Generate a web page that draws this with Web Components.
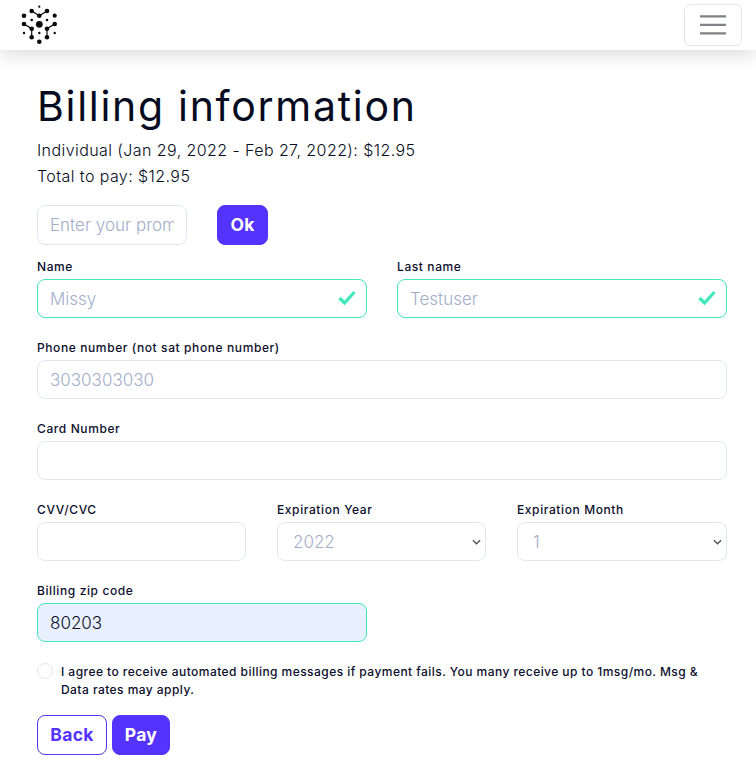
<!DOCTYPE html>
<html lang="en">
<head>
<meta charset="utf-8">
<title>Billing information</title>
<style>
    html, body { margin: 0; padding: 0; background: #fff; }
    body { font-family: 'Inter', 'Noto Sans', sans-serif; color: #0b0e2c; }
</style>
</head>
<body>
<nav-bar></nav-bar>
<billing-page>
    <div slot="heading">Billing information</div>
    <span slot="summary">Individual (Jan 29, 2022 - Feb 27, 2022): $12.95</span>
    <span slot="summary">Total to pay: $12.95</span>
    <form-field slot="promo" placeholder="Enter your promo code"></form-field>
    <purple-button slot="promo-btn">Ok</purple-button>
    <form-field slot="name" label="Name" placeholder="Missy" valid></form-field>
    <form-field slot="lastname" label="Last name" placeholder="Testuser" valid></form-field>
    <form-field slot="phone" label="Phone number (not sat phone number)" placeholder="3030303030"></form-field>
    <form-field slot="card" label="Card Number"></form-field>
    <form-field slot="cvv" label="CVV/CVC"></form-field>
    <form-field slot="year" label="Expiration Year" options="2022,2023,2024"></form-field>
    <form-field slot="month" label="Expiration Month" options="1,2,3,4,5,6,7,8,9,10,11,12"></form-field>
    <form-field slot="zip" label="Billing zip code" value="80203" autofilled></form-field>
    <span slot="consent">I agree to receive automated billing messages if payment fails. You many receive up to 1msg/mo. Msg &amp; Data rates may apply.</span>
    <purple-button slot="actions" outline>Back</purple-button>
    <purple-button slot="actions">Pay</purple-button>
</billing-page>

<script>
class NavBar extends HTMLElement {
    constructor() {
        super();
        this.attachShadow({ mode: 'open' });
        // logo dots: x, y, r
        const dots = [
            [39.3,6.7,1.1],[31.7,11,2.3],[47,11,2.3],[39.3,15.7,2.3],[24,15.7,2.3],[54.7,15.7,2.1],
            [31.7,20,1.3],[47,20,1.3],[39.3,24.3,3.4],[24,24,2.3],[54.7,24,2.3],[31.7,28.7,2.3],
            [47,28.7,2.3],[24,33,1.2],[54.7,33,1.2],[39.3,33,1.2],[31.7,37.3,2.3],[47,37.3,2.3],[39.3,41.7,2.3]
        ].map(d => `<circle cx="${d[0]}" cy="${d[1]}" r="${d[2]}"/>`).join('');
        this.shadowRoot.innerHTML = `
            <style>
    :host {
        display: flex;
        justify-content: space-between;
        align-items: center;
        height: 50px;
        box-sizing: border-box;
        padding: 0 14px 0 16px;
        background: #fff;
        box-shadow: 0 4px 20px rgba(0, 0, 0, 0.15);
        position: relative;
    }
    svg.logo { display: block; width: 48px; height: 50px; }
    .toggler {
        width: 58px;
        height: 42px;
        box-sizing: border-box;
        border: 1px solid #e6e6e6;
        border-radius: 6px;
        background: #fff;
        padding: 0;
    }
    .toggler svg { display: block; width: 56px; height: 40px; }
            </style>
            <svg class="logo" viewBox="16 0 48 50" fill="#0a0a0a" stroke="#0a0a0a">
                <g fill="none" stroke-width="1.2">
                    <path d="M31.7 11 39.3 15.7 47 11M24 24 31.7 28.7V37.3M54.7 24 47 28.7V37.3"/>
                </g>
                <g stroke="none">${dots}</g>
            </svg>
            <button class="toggler" aria-label="Menu">
                <svg viewBox="0 0 56 40"><path d="M15 11.3H41M15 19.8H41M15 28.3H41" stroke="#7f8286" stroke-width="2.2" fill="none"/></svg>
            </button>
        `;
    }
}

class BillingPage extends HTMLElement {
    constructor() {
        super();
        this.attachShadow({ mode: 'open' });
        this.shadowRoot.innerHTML = `
            <style>
    :host {
        display: block;
        padding: 31px 29px 21px 37px;
        color: #0b0e2c;
    }
    .heading {
        font-size: 41px;
        line-height: 50px;
        font-weight: 400;
        letter-spacing: 1.7px;
        color: #050b20;
        margin-bottom: 6px;
    }
    .summary {
        display: flex;
        flex-direction: column;
        font-size: 16px;
        font-weight: 300;
        line-height: 26px;
        letter-spacing: 0.42px;
        color: #050b20;
        margin-bottom: 16px;
    }
    .promo {
        display: grid;
        grid-template-columns: 150px 51px;
        column-gap: 30px;
        margin-bottom: 10px;
    }
    .two { display: grid; column-gap: 30px; grid-template-columns: 1fr 1fr; }
    .three { display: grid; column-gap: 31px; grid-template-columns: 209px 209px 210px; }
    .row { margin-bottom: 18px; }
    .consent {
        display: flex;
        gap: 8px;
        margin: 21px 0 16px;
        font-size: 12px;
        font-weight: 500;
        line-height: 18px;
        letter-spacing: 0.45px;
        padding-right: 16px;
    }
    .circle {
        flex: none;
        width: 16px;
        height: 16px;
        border: 1px solid #e2e6f3;
        border-radius: 50%;
        box-sizing: border-box;
    }
    .actions { display: flex; gap: 5px; }
            </style>
            <div class="heading"><slot name="heading"></slot></div>
            <div class="summary"><slot name="summary"></slot></div>
            <div class="promo"><slot name="promo"></slot><slot name="promo-btn"></slot></div>
            <div class="two row"><slot name="name"></slot><slot name="lastname"></slot></div>
            <div class="row"><slot name="phone"></slot></div>
            <div class="row"><slot name="card"></slot></div>
            <div class="three row"><slot name="cvv"></slot><slot name="year"></slot><slot name="month"></slot></div>
            <div class="two"><slot name="zip"></slot></div>
            <div class="consent"><span class="circle"></span><div><slot name="consent"></slot></div></div>
            <div class="actions"><slot name="actions"></slot></div>
        `;
    }
}

class FormField extends HTMLElement {
    constructor() {
        super();
        this.attachShadow({ mode: 'open' });
    }
    connectedCallback() {
        const label = this.getAttribute('label');
        const options = this.getAttribute('options');
        const valid = this.hasAttribute('valid');
        const auto = this.hasAttribute('autofilled');
        let control;
        if (options) {
            control = `<select>${options.split(',').map(o => `<option>${o}</option>`).join('')}</select>
                <svg class="chev" viewBox="0 0 10 6"><path d="M1 1l4 4 4-4" fill="none" stroke="#555" stroke-width="1.6"/></svg>`;
        } else {
            const ph = this.getAttribute('placeholder') || '';
            const val = this.getAttribute('value') || '';
            control = `<input type="text" placeholder="${ph}" value="${val}">`;
        }
        this.shadowRoot.innerHTML = `
            <style>
    :host { display: block; min-width: 0; }
    label {
        display: block;
        height: 24px;
        font-size: 12px;
        font-weight: 500;
        line-height: 24px;
        letter-spacing: 0.6px;
        color: #0b0e2c;
    }
    .box { position: relative; height: 39px; }
    input, select {
        display: block;
        width: 100%;
        height: 100%;
        box-sizing: border-box;
        margin: 0;
        padding: 0 12px;
        border: 1px solid #e2e6f3;
        border-radius: 8px;
        background: #fff;
        outline: none;
        font-family: inherit;
        font-size: 17px;
        font-weight: 300;
        letter-spacing: 0;
        color: #0b0e2c;
    }
    input::placeholder { color: #a2aecb; opacity: 1; }
    select { appearance: none; padding-left: 15px; color: #a2aecb; }
    .valid input { border-color: #40e8bb; }
    .auto input { border-color: #40e8bb; background: #e8f0fe; }
    .check { position: absolute; right: 11px; top: 11px; width: 18px; height: 15px; }
    .chev { position: absolute; right: 5px; top: 17px; width: 9px; height: 6px; }
            </style>
            ${label ? `<label>${label}</label>` : ''}
            <div class="box ${valid ? 'valid' : ''} ${auto ? 'auto' : ''}" style="${label ? '' : 'height:40px'}">
                ${control}
                ${valid ? `<svg class="check" viewBox="0 0 18 15"><path d="M1.5 8l5 5L16.5 2" fill="none" stroke="#40e8bb" stroke-width="3.2"/></svg>` : ''}
            </div>
        `;
    }
}

class PurpleButton extends HTMLElement {
    constructor() {
        super();
        this.attachShadow({ mode: 'open' });
        this.shadowRoot.innerHTML = `
            <style>
    :host {
        display: inline-flex;
        justify-content: center;
        align-items: center;
        height: 40px;
        box-sizing: border-box;
        min-width: 58px;
        padding: 0 11px 2px;
        border: 1px solid #5533ff;
        border-radius: 8px;
        background: #5533ff;
        color: #fff;
        font-size: 17.5px;
        font-weight: 700;
        letter-spacing: 0.3px;
        cursor: pointer;
    }
    :host([outline]) { background: #fff; color: #5533ff; width: 70px; }
    :host([slot="promo-btn"]) { min-width: 51px; }
            </style>
            <slot></slot>
        `;
    }
}

customElements.define('nav-bar', NavBar);
customElements.define('billing-page', BillingPage);
customElements.define('form-field', FormField);
customElements.define('purple-button', PurpleButton);
</script>
</body>
</html>
